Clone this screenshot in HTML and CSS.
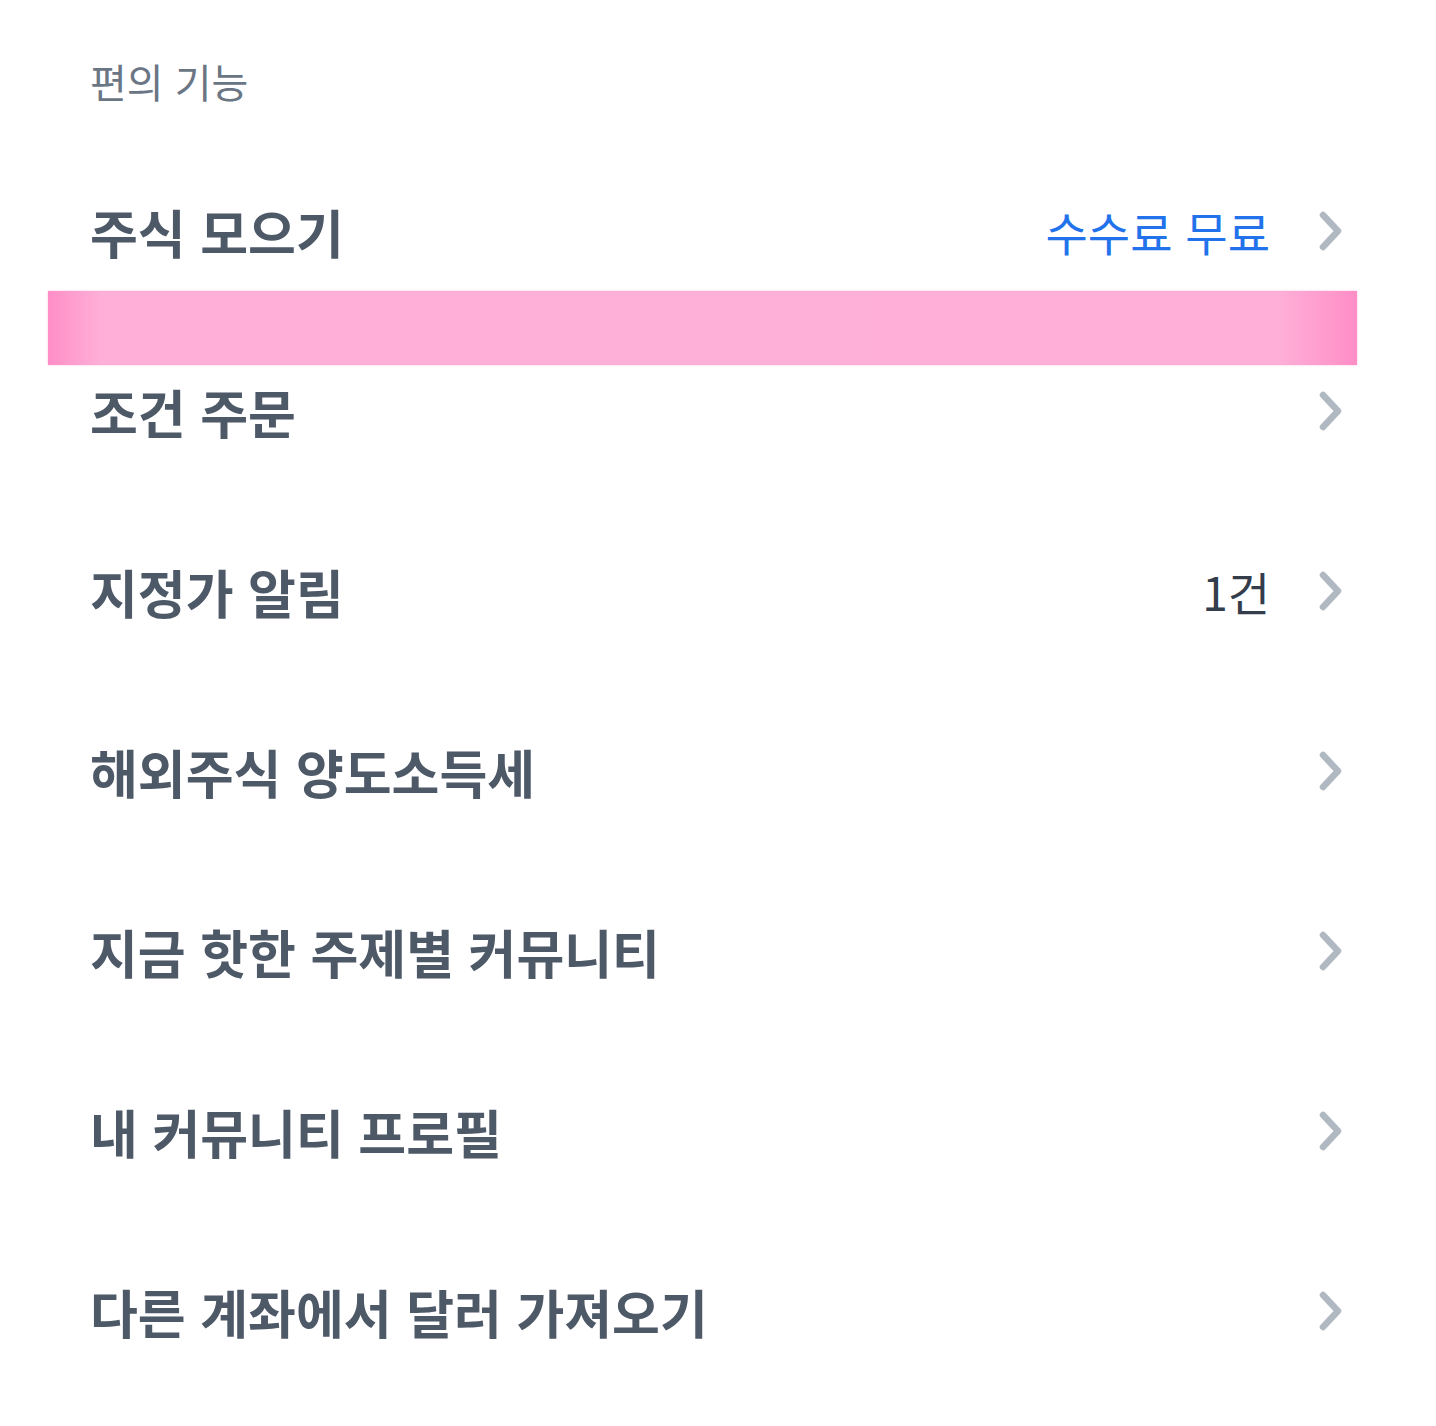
FILE: index.html
```html
<!DOCTYPE html>
<html lang="ko">
<head>
<meta charset="utf-8">
<link rel="stylesheet" href="styles.css">
</head>
<body>
<div class="page">
  <h2 class="section-title">편의 기능</h2>
  <ul class="menu">
    <li class="row"><span class="label">주식 모으기</span><span class="value blue">수수료 무료</span><svg class="chev" viewBox="0 0 24 40"><path d="M4 4 L19 20 L4 36"/></svg></li>
    <li class="row"><span class="label">조건 주문</span><svg class="chev" viewBox="0 0 24 40"><path d="M4 4 L19 20 L4 36"/></svg></li>
    <li class="row"><span class="label">지정가 알림</span><span class="value">1건</span><svg class="chev" viewBox="0 0 24 40"><path d="M4 4 L19 20 L4 36"/></svg></li>
    <li class="row"><span class="label">해외주식 양도소득세</span><svg class="chev" viewBox="0 0 24 40"><path d="M4 4 L19 20 L4 36"/></svg></li>
    <li class="row"><span class="label">지금 핫한 주제별 커뮤니티</span><svg class="chev" viewBox="0 0 24 40"><path d="M4 4 L19 20 L4 36"/></svg></li>
    <li class="row"><span class="label">내 커뮤니티 프로필</span><svg class="chev" viewBox="0 0 24 40"><path d="M4 4 L19 20 L4 36"/></svg></li>
    <li class="row"><span class="label">다른 계좌에서 달러 가져오기</span><svg class="chev" viewBox="0 0 24 40"><path d="M4 4 L19 20 L4 36"/></svg></li>
  </ul>
  <div class="highlight"></div>
</div>
</body>
</html>
```

FILE: styles.css
```css
html, body {
  margin: 0;
  padding: 0;
  background: #ffffff;
}
body {
  font-family: "Noto Sans CJK KR", "Noto Sans", sans-serif;
}
.page {
  position: relative;
  width: 1436px;
  height: 1426px;
  overflow: hidden;
}
.section-title {
  margin: 0;
  padding: 53px 0 0 90px;
  height: 141px;
  box-sizing: border-box;
  font-size: 40px;
  line-height: 56px;
  font-weight: 400;
  color: #6b7684;
}
.menu {
  list-style: none;
  margin: 0;
  padding: 0 92px 0 90px;
}
.row {
  height: 180px;
  display: flex;
  align-items: center;
}
.label {
  flex: 1;
  font-size: 52px;
  font-weight: 700;
  color: #4e5968;
}
.value {
  font-size: 46px;
  font-weight: 400;
  color: #333d4b;
  margin-right: 48px;
}
.value.blue {
  color: #2272eb;
}
.chev {
  width: 26px;
  height: 40px;
  fill: none;
  stroke: #b0b8c1;
  stroke-width: 6.5;
  stroke-linecap: round;
  stroke-linejoin: round;
}
.highlight {
  position: absolute;
  left: 48px;
  top: 291px;
  width: 1309px;
  height: 74px;
  background: linear-gradient(to right, #ff8ec6 0%, #ffafd8 4%, #ffb0d8 50%, #ffafd8 94%, #ff8ec6 100%);
  box-shadow: 0 0 2px rgba(255, 150, 200, 0.6);
}
```
